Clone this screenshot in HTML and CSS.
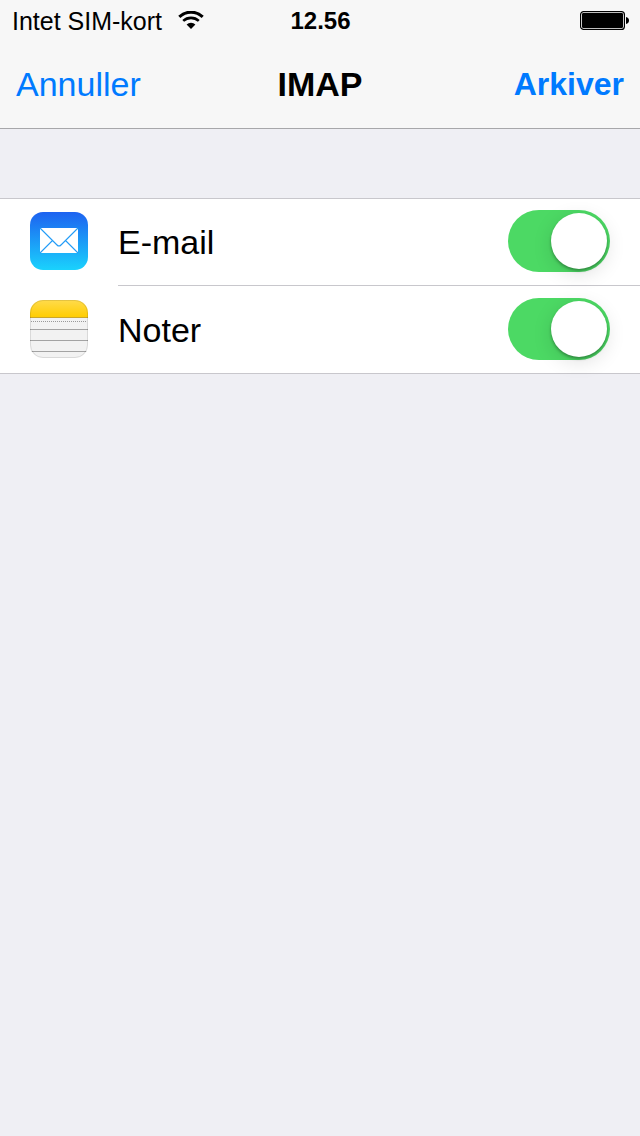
FILE: index.html
```
<!DOCTYPE html>
<html lang="da">
<head>
<meta charset="utf-8">
<meta name="viewport" content="width=device-width">
<title>IMAP</title>
<link rel="stylesheet" href="styles.css">
</head>
<body>
<header class="header">
  <div class="status">
    <div class="status-left">
      <span class="status-carrier">Intet SIM-kort</span>
      <svg class="wifi" width="26" height="18" viewBox="0 0 26 18" aria-hidden="true">
        <path d="M1.300 5.800a17 17 0 0 1 23.400 0" fill="none" stroke="#000" stroke-width="3"/>
        <path d="M5.200 9.900a11.500 11.500 0 0 1 15.600 0" fill="none" stroke="#000" stroke-width="2.600"/>
        <path d="M8.600 13.500a6.600 6.600 0 0 1 8.800 0L13 18z"/>
      </svg>
    </div>
    <span class="status-time">12.56</span>
    <svg class="battery" width="49" height="19" viewBox="0 0 49 19" role="img" aria-label="Batteri">
      <rect x=".6" y=".6" width="43.8" height="17.8" rx="3" fill="#fff" stroke="#000" stroke-width="1.2"/>
      <rect x="2" y="2" width="41" height="15" rx="1.2"/>
      <path d="M46 6c2 .4 3 1.800 3 3.500s-1 3.100-3 3.500z"/>
    </svg>
  </div>
  <nav class="nav">
    <button class="nav-button" type="button">Annuller</button>
    <h1 class="nav-title">IMAP</h1>
    <button class="nav-button nav-button-save" type="button">Arkiver</button>
  </nav>
</header>
<main class="content">
  <div class="list">
    <div class="row">
      <svg class="icon" viewBox="0 0 58 58" aria-hidden="true">
        <defs>
          <linearGradient id="mail" x1="0" y1="0" x2="0" y2="1">
            <stop offset="0" stop-color="#1d62f0"/><stop offset="1" stop-color="#1ad2fd"/>
          </linearGradient>
        </defs>
        <rect width="58" height="58" rx="13" fill="url(#mail)"/>
        <rect x="10" y="16" width="38" height="25" fill="#fff"/>
        <path d="M10 16l17 17q2 2 4 0l17-17M10 41l12.500-12.500M48 41L35.500 28.500" fill="none" stroke="#239cf7" stroke-width="1.100"/>
      </svg>
      <div class="row-body">
        <label class="row-label" for="email">E-mail</label>
        <input class="switch" id="email" type="checkbox" role="switch" checked>
      </div>
    </div>
    <div class="row">
      <svg class="icon" viewBox="0 0 58 58" aria-hidden="true">
        <defs>
          <linearGradient id="band" x1="0" y1="0" x2="0" y2="1">
            <stop offset="0" stop-color="#ffdb4c"/><stop offset="1" stop-color="#ffcd02"/>
          </linearGradient>
          <clipPath id="tile"><rect width="58" height="58" rx="13"/></clipPath>
        </defs>
        <g clip-path="url(#tile)">
          <rect width="58" height="58" fill="#f2f2f2"/>
          <rect width="58" height="17" fill="url(#band)"/>
          <rect y="17" width="58" height="1" fill="#c9a62c"/>
          <path d="M1 21.500h56" stroke="#999" stroke-dasharray="1 1"/>
          <path d="M0 29.500h58M0 40.500h58M0 51.500h58" stroke="#a3a3a3"/>
        </g>
        <rect x=".5" y=".5" width="57" height="57" rx="12.500" fill="none" stroke="#000" stroke-opacity=".1"/>
      </svg>
      <div class="row-body">
        <label class="row-label" for="notes">Noter</label>
        <input class="switch" id="notes" type="checkbox" role="switch" checked>
      </div>
    </div>
  </div>
</main>
</body>
</html>
```
FILE: styles.css
```
* {
  box-sizing: border-box;
}

body {
  margin: 0;
  min-height: 100vh;
  background: #efeff4;
  color: #000;
  font-family: "Liberation Sans", Arial, sans-serif;
}

.header {
  background: #f7f7f7;
  border-bottom: 1px solid #a7a7aa;
}

.status {
  display: grid;
  grid-template-columns: 1fr auto 1fr;
  align-items: center;
  height: 40px;
  padding: 0 11px 0 12px;
  font-size: 24px;
  line-height: 38px;
}

.status-left {
  display: flex;
  align-items: center;
  gap: 16px;
}

.status-carrier {
  padding-top: 2px;
  font-size: 25px;
}

.status-time {
  padding-top: 2px;
  font-weight: bold;
}

.battery {
  justify-self: end;
}

.nav {
  display: grid;
  grid-template-columns: 1fr auto 1fr;
  align-items: center;
  height: 88px;
  padding: 0 16px;
}

.nav-button {
  justify-self: start;
  padding: 0;
  border: 0;
  background: none;
  color: #007aff;
  font-family: inherit;
  font-size: 34px;
  line-height: 40px;
}

.nav-button-save {
  justify-self: end;
  font-size: 32px;
  font-weight: bold;
}

.nav-title {
  margin: 0;
  font-size: 34px;
  line-height: 40px;
}

.content {
  padding-top: 69px;
}

.list {
  background: #fff;
  box-shadow: inset 0 1px #c8c7cc, inset 0 -1px #c8c7cc;
}

.row {
  display: flex;
  align-items: center;
  gap: 30px;
  height: 88px;
  padding-left: 30px;
}

.icon {
  flex: none;
  width: 58px;
  height: 58px;
  margin-bottom: 2px;
}

.row-body {
  display: flex;
  flex: 1;
  align-items: center;
  justify-content: space-between;
  height: 88px;
  padding: 0 30px 2px 0;
}

.row:not(:last-child) .row-body {
  box-shadow: inset 0 -1px #c8c7cc;
}

.row-label {
  padding-top: 2px;
  font-size: 34px;
  line-height: 40px;
}

.switch {
  appearance: none;
  width: 102px;
  height: 62px;
  margin: 0;
  padding: 3px;
  border-radius: 31px;
  background: #e5e5ea;
}

.switch::before {
  content: "";
  display: block;
  width: 56px;
  height: 56px;
  border-radius: 50%;
  background: #fff;
  box-shadow: 0 2px 3px rgba(0, 0, 0, 0.3), 0 5px 20px rgba(0, 0, 0, 0.12);
}

.switch:checked {
  background: #4cd964;
}

.switch:checked::before {
  margin-left: auto;
}
```
